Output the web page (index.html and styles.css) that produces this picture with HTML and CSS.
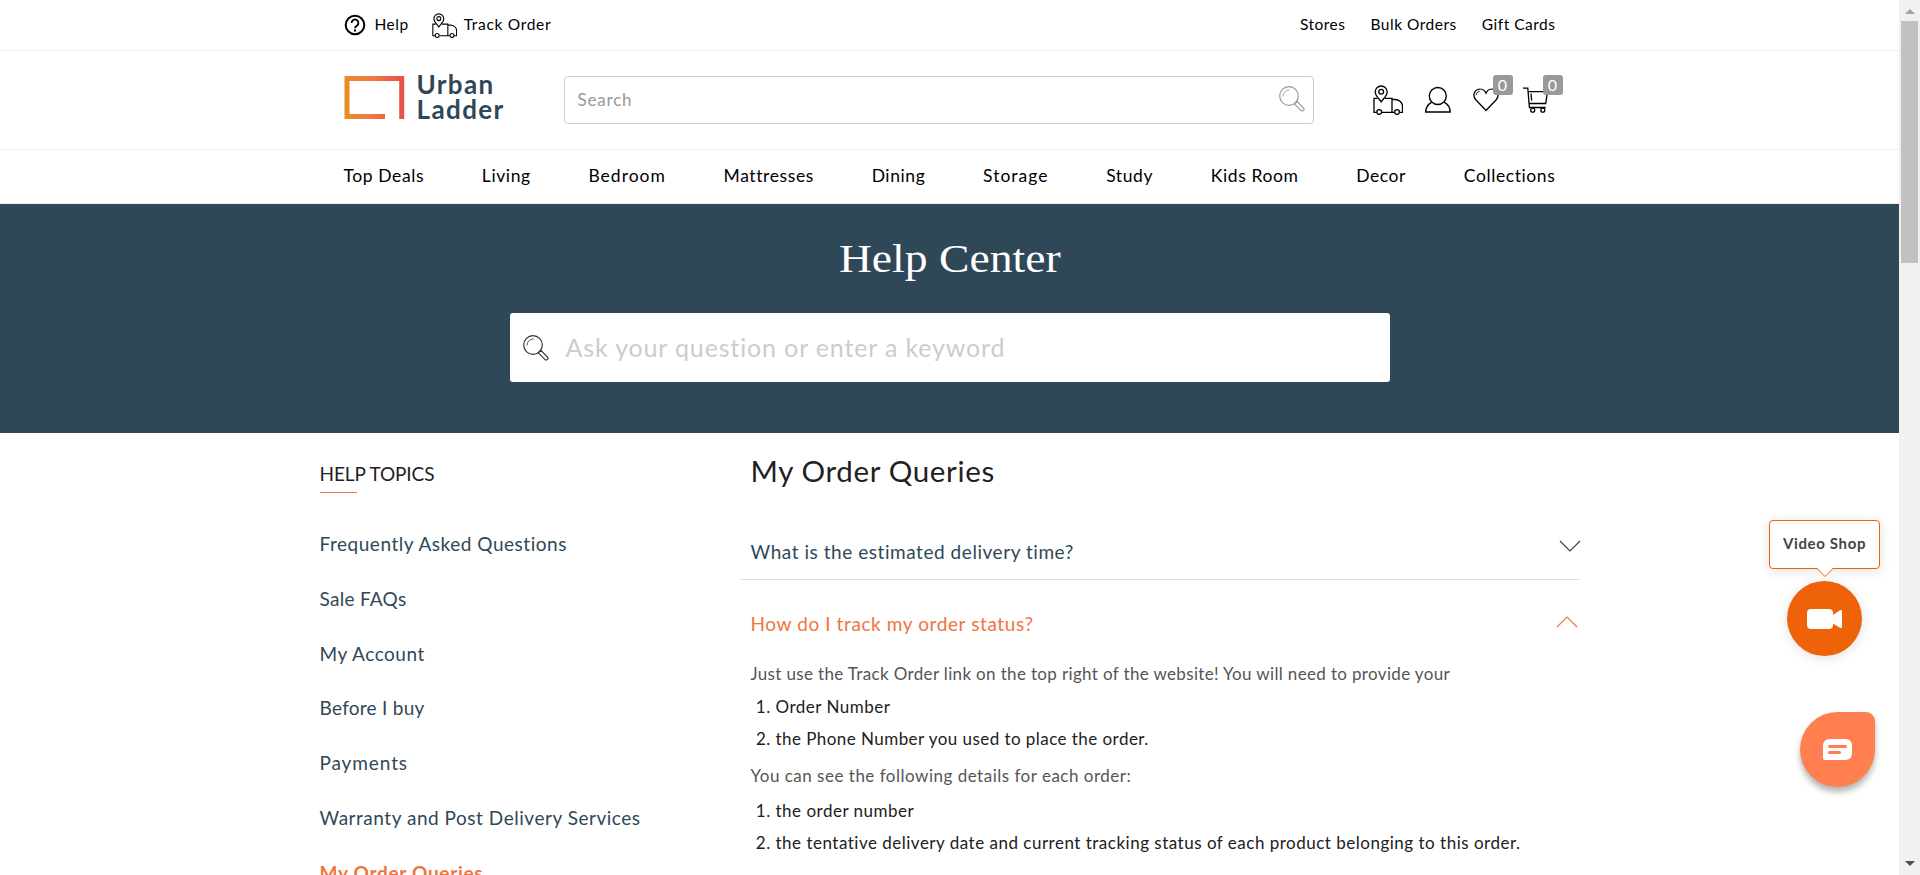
FILE: index.html
```html
<!DOCTYPE html>
<html lang="en">
<head>
<meta charset="utf-8">
<title>Help Center - Urban Ladder</title>
<link rel="stylesheet" href="styles.css">
</head>
<body>
<svg class="defs" width="0" height="0">
  <defs>
    <linearGradient id="brand" x1="0" x2="1" y1="0" y2="0"><stop offset="0" stop-color="#ea8b24"/><stop offset=".45" stop-color="#f07845"/><stop offset="1" stop-color="#e9524a"/></linearGradient>
    <symbol id="truck" viewBox="0 0 30 30">
      <path d="M4.5 13.3H1v14h2.600M8.700 27.300h12.700M26.500 27.300H29.500V21c0-3.500-3.500-6.500-7.500-6.500H19M12 13.300h7v14" fill="none" stroke="currentColor" stroke-width="1.300"/>
      <path d="M8.200 16.800C5.500 13 2.200 10.500 2.200 7a6 6 0 0 1 12 0c0 3.500-3.300 6-6 9.800z" fill="none" stroke="currentColor" stroke-width="1.300"/>
      <circle cx="8.200" cy="6.700" r="2.400" fill="none" stroke="currentColor" stroke-width="1.300"/>
      <circle cx="6.200" cy="27" r="2.400" fill="#fff" stroke="currentColor" stroke-width="1.300"/>
      <circle cx="24" cy="27" r="2.400" fill="#fff" stroke="currentColor" stroke-width="1.300"/>
    </symbol>
    <symbol id="lens" viewBox="0 0 26 26">
      <g fill="none" stroke="currentColor" stroke-width="1.200"><circle cx="10" cy="10" r="9.300"/><path d="M4 10.500A6.300 6.300 0 0 1 10.800 4" stroke-width=".8"/><path d="M15.300 17.800l7 7c1.800.8 3.300-.9 2.500-2.500l-7-7z"/></g>
    </symbol>
  </defs>
</svg>
<div class="page">
  <header>
    <div class="topbar"><div class="wrap topbar-in">
      <a class="help"><svg width="22" height="22" viewBox="0 0 22 22" fill="none" stroke="#000" stroke-width="2"><circle cx="11" cy="11" r="9.300"/><path d="M7.600 8.900a3.400 3.400 0 1 1 5.300 2.800c-1.300.9-1.900 1.300-1.900 2.600" stroke-width="1.800"/><path d="M11 15.600v2" /></svg><span>Help</span></a>
      <a class="track"><svg width="25" height="25"><use href="#truck"/></svg><span>Track Order</span></a>
      <nav class="toplinks"><a>Stores</a><a>Bulk Orders</a><a>Gift Cards</a></nav>
    </div></div>
    <div class="mainbar"><div class="wrap mainbar-in">
      <a class="logo"><svg width="61" height="43" viewBox="0 0 61 43"><path d="M41 40.500H3V2.500H57.700V43" fill="none" stroke="url(#brand)" stroke-width="5"/></svg><span class="logo-text"><span>Urban</span><span>Ladder</span></span></a>
      <div class="search"><span>Search</span><svg width="26" height="26"><use href="#lens"/></svg></div>
      <div class="actions">
        <a><svg width="30" height="30"><use href="#truck"/></svg></a>
        <a><svg width="26" height="30" viewBox="0 0 26 30" fill="none" stroke="#000" stroke-width="1.400"><circle cx="12.800" cy="11" r="8.500"/><path d="M6.800 17.200C2.800 19.500.8 22.500.7 27h24.500c-.1-4.500-2-7.500-6-9.800"/></svg></a>
        <a><svg width="26" height="30" viewBox="0 0 26 30" fill="none" stroke="#000" stroke-width="1.300"><path d="M13 25.500L2.800 14.800C-.5 11 .8 6 4.600 4.500 8 3.200 11.500 4.800 13 8.200c1.500-3.400 5-5 8.400-3.700 3.800 1.500 5.100 6.500 1.800 10.300z"/><path d="M3.200 10.200c0-2 1.200-3.400 3.300-3.700" stroke-width=".9"/></svg><b>0</b></a>
        <a class="cart"><svg width="26" height="30" viewBox="0 0 26 30" fill="none" stroke="#000" stroke-width="1.300"><path d="M0 3.200h4.800l1.600 19.300h16.300M5 6.600h19.500l-1.800 11.900H6M8 8.500l.7 7"/><circle cx="9.700" cy="25.200" r="2"/><circle cx="19.800" cy="25.200" r="2"/></svg><b>0</b></a>
      </div>
    </div></div>
    <div class="navbar"><nav class="wrap navbar-in"><a>Top Deals</a><a>Living</a><a class="loose">Bedroom</a><a>Mattresses</a><a>Dining</a><a class="loose">Storage</a><a>Study</a><a>Kids Room</a><a>Decor</a><a>Collections</a></nav></div>
  </header>
  <section class="banner">
    <h1><span>Help Center</span></h1>
    <div class="ask"><svg width="26" height="26"><use href="#lens"/></svg><span>Ask your question or enter a keyword</span></div>
  </section>
  <main class="content">
    <aside>
      <h2><span>HELP TOPICS</span></h2>
      <ul>
        <li>Frequently Asked Questions</li><li class="tight">Sale FAQs</li><li>My Account</li><li class="tight">Before I buy</li><li class="loose">Payments</li><li>Warranty and Post Delivery Services</li><li class="active">My Order Queries</li>
      </ul>
    </aside>
    <section class="answers">
      <h2><span>My Order Queries</span></h2>
      <div class="question closed"><span>What is the estimated delivery time?</span><svg width="22" height="12" viewBox="0 0 22 12"><path d="M1 1l10 10L21 1"/></svg></div>
      <div class="question open"><span>How do I track my order status?</span><svg width="22" height="12" viewBox="0 0 22 12"><path d="M1 11L11 1l10 10"/></svg></div>
      <div class="answer">
        <p class="intro">Just use the Track Order link on the top right of the website! You will need to provide your</p>
        <ol><li>Order Number</li><li class="phone">the Phone Number you used to place the order.</li></ol>
        <p>You can see the following details for each order:</p>
        <ol><li>the order number</li><li>the tentative delivery date and current tracking status of each product belonging to this order.</li></ol>
      </div>
    </section>
  </main>
</div>
<div class="scrollbar"><i class="up"></i><i class="thumb"></i><i class="down"></i></div>
<div class="video">
  <div class="tip"><span>Video Shop</span><svg width="18" height="11" viewBox="0 0 18 11"><path d="M0 0h18L9 9.500z" fill="#fff"/><path d="M.5 1L9 9.500 17.500 1" fill="none" stroke="#ee6309"/></svg></div>
  <div class="cam"><svg width="35" height="20" viewBox="0 0 35 20" fill="#fff"><rect width="26" height="20" rx="4"/><path d="M25 6.500L33 1.200q2-.8 2 .8v16q0 1.600-2 .8L25 14z"/></svg></div>
</div>
<div class="chat"><svg width="29" height="21" viewBox="0 0 29 21"><path d="M7 0h15q7 0 7 7v7q0 7-7 7H2q-2 0-2-2V7q0-7 7-7z" fill="#fff"/><path d="M6.500 7.500h16M6.500 13.500h10" stroke="#ff7f50" stroke-width="3" stroke-linecap="round"/></svg></div>
</body>
</html>
```
FILE: styles.css
```css
* { box-sizing: border-box; }
body { margin: 0; width: 1920px; height: 875px; overflow: hidden; display: flex; background: #fff; color: #000; font-family: Lato, "Open Sans", sans-serif; font-variant-ligatures: none; }
.defs { position: absolute; }
.page { width: 1899px; height: 875px; overflow: hidden; }
svg { display: block; flex: none; }
h1, h2, p, ul, ol { margin: 0; padding: 0; font-weight: 400; }
a, span, li, p { white-space: nowrap; }
.wrap { width: 1212px; margin: 0 auto; display: flex; }

.topbar { height: 51px; border-bottom: 1px solid #eee; font-size: 15.500px; letter-spacing: .5px; }
.topbar-in { height: 50px; align-items: center; }
.topbar a { display: flex; align-items: center; }
.topbar span, .toplinks a { padding-bottom: 2px; }
.help { gap: 9px; margin-right: 23px; }
.track { gap: 7px; letter-spacing: .700px; }
.toplinks { display: flex; gap: 25px; margin-left: auto; }

.mainbar { height: 99px; border-bottom: 1px solid #eee; }
.mainbar-in { height: 98px; align-items: center; }
.logo { display: flex; gap: 12px; width: 220px; margin-top: -3px; color: #2f4858; }
.logo-text { display: flex; flex-direction: column; font-size: 26px; font-weight: 700; line-height: 25px; letter-spacing: 1.400px; margin-top: -4px; }
.search { width: 750px; height: 48px; border: 1px solid #ccc; border-radius: 4px; display: flex; align-items: center; justify-content: space-between; padding: 0 8px 0 13px; font-size: 17px; letter-spacing: .800px; color: #999; }
.search span { padding-bottom: 2px; }
.search svg { margin-bottom: 2px; }
.actions { display: flex; margin-left: 59px; gap: 22px; color: #000; }
.actions a { position: relative; }
.cart { margin-left: 2px; }
.actions b { position: absolute; left: 20px; top: -10px; width: 20px; height: 20px; border-radius: 3px; background: #999; color: #fff; font-size: 16px; font-weight: 400; line-height: 20px; text-align: center; }

.navbar { height: 54px; border-bottom: 1px solid #eee; }
.navbar-in { height: 50px; align-items: center; justify-content: space-between; font-size: 17.500px; letter-spacing: .600px; }
.navbar .loose { letter-spacing: 1px; }

.banner { height: 229px; background: #2f4858; padding-top: 29px; }
.banner h1 { height: 80px; color: #fff; font-family: "Liberation Serif", serif; font-size: 39px; line-height: 52px; text-align: center; }
.banner h1 span { display: inline-block; transform: scaleX(1.170); }
.ask { width: 880px; height: 69px; margin: 0 auto; padding: 0 13px; background: #fff; border-radius: 3px; display: flex; align-items: center; gap: 17px; font-size: 25px; letter-spacing: .850px; color: #333; }
.ask span { color: #ccc; padding-bottom: 2px; }

.content { width: 1260px; margin: 0 auto; display: flex; }
aside { width: 420px; font-size: 19px; letter-spacing: .530px; color: #2f4858; }
aside h2 { height: 84px; padding-top: 29px; font-size: 19px; line-height: 24px; letter-spacing: -.1px; color: #212121; }
aside h2::after { content: ""; display: block; width: 37px; height: 1px; margin-top: 6px; background: #f0743e; }
aside ul { list-style: none; }
aside li { height: 54.800px; line-height: 54.800px; }
aside .tight { letter-spacing: .280px; }
aside .loose { letter-spacing: .900px; }
aside .active { color: #f0743e; font-weight: 700; letter-spacing: .700px; }
.answers { width: 840px; }
.answers h2 { height: 89px; padding: 20px 11px 0; font-size: 29.500px; line-height: 36px; letter-spacing: .650px; color: #212121; }
.question { display: flex; justify-content: space-between; font-size: 19px; letter-spacing: .550px; }
.question path { fill: none; stroke: currentColor; stroke-width: 1.200; }
.closed { height: 58px; padding: 18px 0 0 11px; border-bottom: 1px solid #ddd; color: #2f4858; line-height: 24px; }
.closed svg { margin-right: -1px; }
.open { height: 75px; padding: 32px 2px 0 11px; color: #f0743e; line-height: 24px; letter-spacing: .600px; }
.open svg { margin-top: 4px; }
.answer { padding-left: 11px; font-size: 17px; letter-spacing: .500px; color: #212121; }
.answer p { height: 38px; line-height: 34px; color: #555; }
.answer .intro { line-height: 37px; height: 36px; letter-spacing: .350px; }
.answer ol { padding-left: 25px; height: 68px; }
.answer ol:last-child { margin-top: -2px; }
.answer li { line-height: 32px; }
.answer .phone { letter-spacing: .450px; }

.scrollbar { width: 21px; height: 875px; padding: 9px 2px; background: #f1f1f1; display: flex; flex-direction: column; align-items: center; }
.scrollbar i { display: block; }
.up { border: 5px solid transparent; border-top: 0; border-bottom-color: #a3a3a3; }
.thumb { width: 17px; height: 242px; margin: 7px 0 auto; background: #c1c1c1; }
.down { border: 5px solid transparent; border-bottom: 0; border-top-color: #505050; }

.video { position: absolute; left: 1769px; top: 520px; width: 111px; display: flex; flex-direction: column; align-items: center; gap: 12px; }
.tip { position: relative; width: 111px; height: 49px; border: 1px solid #ee6309; border-radius: 4px; background: #fff; box-shadow: 0 2px 12px rgba(0,0,0,.12); display: flex; align-items: center; justify-content: center; padding-bottom: 3px; font-size: 15px; letter-spacing: .650px; font-weight: 700; color: #444; }
.tip svg { position: absolute; left: 46px; top: 46px; }
.cam { width: 75px; height: 75px; border-radius: 50%; background: #ee6309; display: flex; align-items: center; justify-content: center; box-shadow: 0 2px 12px rgba(0,0,0,.12); }
.chat { position: absolute; left: 1800px; top: 712px; width: 75px; height: 75px; border-radius: 50% 9px 50% 50%; background: #ff7f50; display: flex; align-items: center; justify-content: center; box-shadow: 0 5px 6px rgba(0,0,0,.3); }
```
